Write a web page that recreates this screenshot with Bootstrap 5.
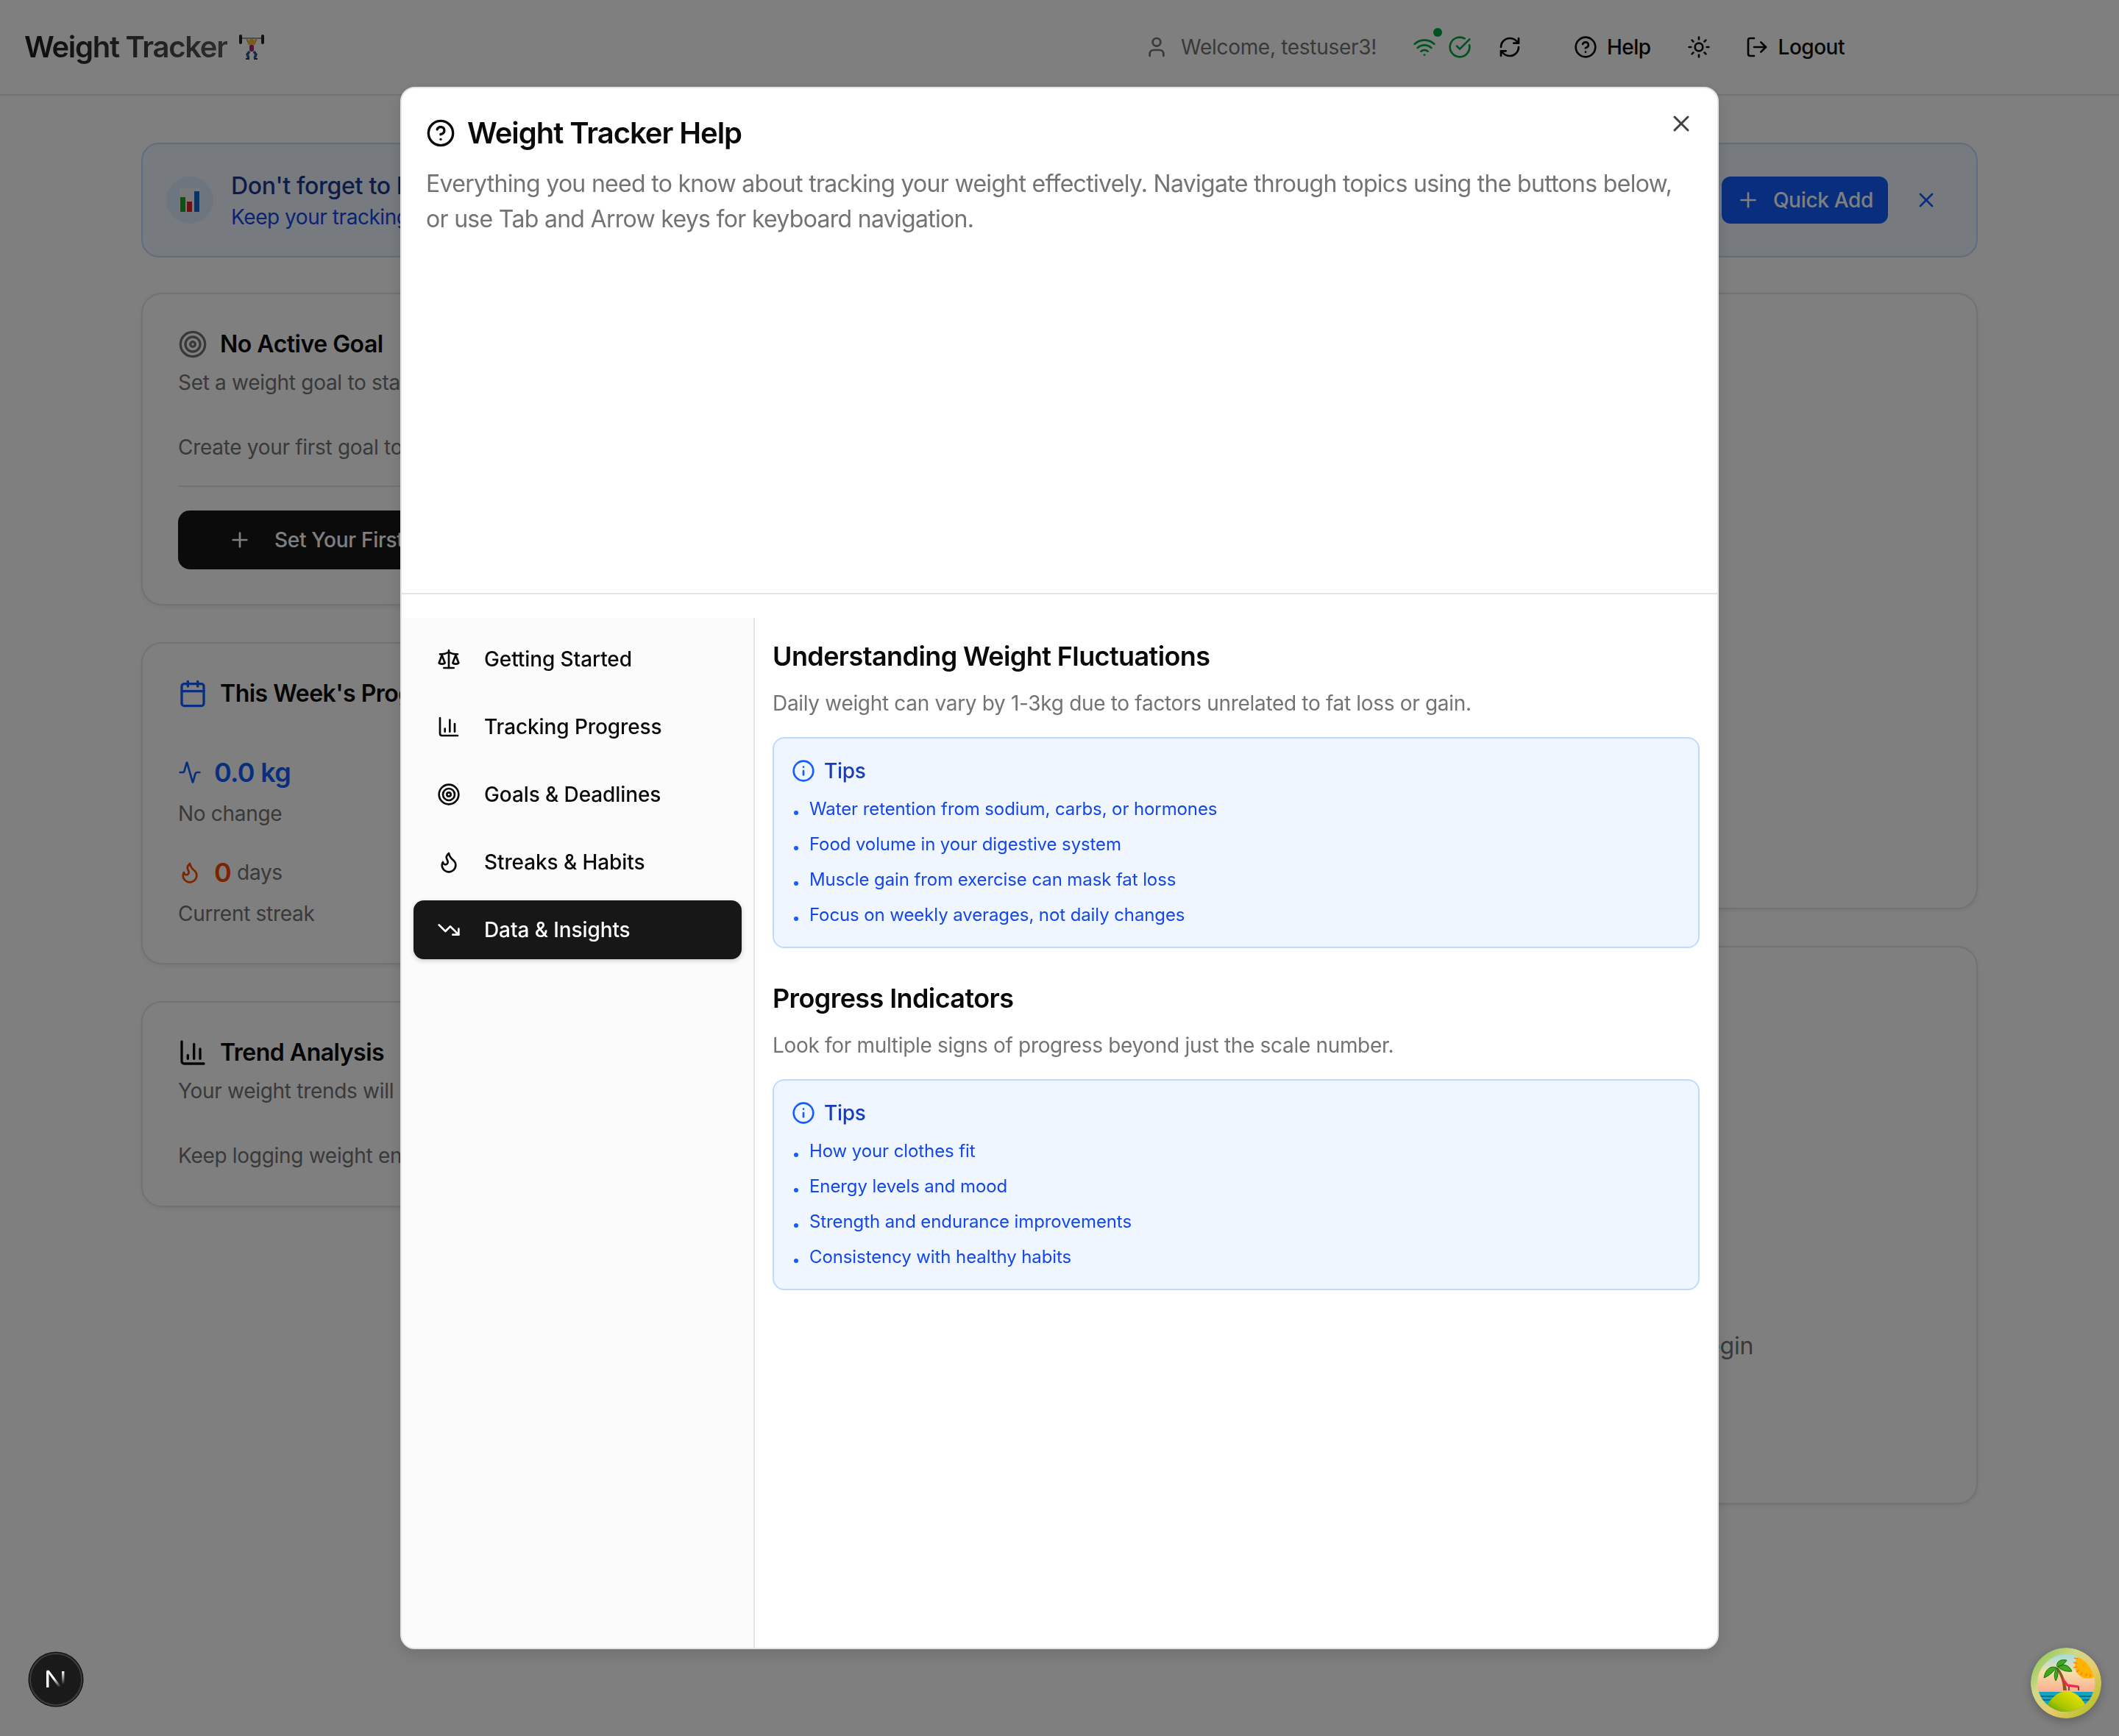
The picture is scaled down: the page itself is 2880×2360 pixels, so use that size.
<!DOCTYPE html>
<html lang="en">
<head>
  <meta charset="UTF-8" />
  <title>Weight Tracker</title>
  <meta name="viewport" content="width=device-width, initial-scale=1" />
  <link href="https://cdn.jsdelivr.net/npm/bootstrap@5.3.0/dist/css/bootstrap.min.css" rel="stylesheet" />
  <style>
    html, body { height: 2360px; overflow: hidden; }
    body { font-family: "Inter", "Liberation Sans", sans-serif; font-size: 28px; letter-spacing: -.3px; color: #0a0a0a; background: #fff; }
    svg.ico { fill: none; stroke: currentColor; stroke-width: 2; stroke-linecap: round; stroke-linejoin: round; flex: none; }
    .i32 { width: 32px; height: 32px; }
    .i36 { width: 36px; height: 36px; }
    .i40 { width: 40px; height: 40px; }
    .muted-txt { color: #737373; }

    /* top bar */
    .top-bar { height: 130px; border-bottom: 2px solid #e5e5e5; padding: 0 373px 0 33px; }
    .brand-txt { font-size: 40px; font-weight: 600; line-height: 56px; letter-spacing: -1.3px; margin-right: 16px; background: linear-gradient(90deg, #1a1a1a, #5a5a5a); -webkit-background-clip: text; background-clip: text; color: transparent; }
    .nav-user { gap: 17px; }
    .nav-wifi { position: relative; margin-left: 49px; }
    .nav-dot { position: absolute; top: -10px; left: 28px; width: 12px; height: 12px; border-radius: 50%; background: #00a63e; }
    .nav-green { color: #00a63e; }
    .nav-refresh { margin-left: 36px; }
    .nav-help { margin-left: 71px; gap: 13px; }
    .nav-sun { margin-left: 49px; }
    .nav-logout { margin-left: 47px; gap: 13px; }
    .nav-strong { font-weight: 500; letter-spacing: -.5px; }

    /* page behind the dialog */
    .page-main { padding: 64px 192px 0; }
    .reminder { height: 156px; border: 2px solid #bedbff; border-radius: 24px; background: #eff6ff; padding: 0 32px; margin-bottom: 48px; }
    .reminder-circle { width: 64px; height: 64px; border-radius: 50%; background: #dbeafe; }
    .reminder-title { font-size: 32px; font-weight: 500; line-height: 44px; color: #1c398e; letter-spacing: -.3px; }
    .reminder-sub { font-size: 28px; line-height: 36px; margin-top: 2px; letter-spacing: -.45px; color: #1447e6; }
    .quick-btn { height: 64px; width: 226px; margin-left: auto; border-radius: 12px; background: #155dfc; color: #fff; font-size: 28px; font-weight: 500; letter-spacing: -.3px; border: 0; gap: 18px; }
    .quick-x { color: #155dfc; margin-left: 12px; margin-right: 20px; }
    .dash-row { --bs-gutter-x: 48px; }
    .dash-card { --bs-card-border-color: #e5e5e5; --bs-card-border-width: 2px; --bs-card-border-radius: 28px; --bs-card-inner-border-radius: 26px; --bs-card-spacer-x: 48px; --bs-card-spacer-y: 48px; box-shadow: 0 2px 6px rgba(0,0,0,.08); }
    .card-stack { gap: 50px; }
    .title-row { height: 40px; gap: 17px; }
    .title-txt { font-size: 32px; font-weight: 600; line-height: 40px; letter-spacing: -.5px; }
    .line-40 { line-height: 40px; }
    .mt-12px { margin-top: 12px; }
    .mt-16px { margin-top: 16px; }
    .mt-40px { margin-top: 40px; }
    .mt-48px { margin-top: 48px; }
    .mt-67px { margin-top: 67px; }
    .pb-47px { padding-bottom: 47px; }
    .hr-line { height: 2px; background: #e5e5e5; margin-top: 32px; }
    .first-btn { height: 80px; margin-top: 32px; border-radius: 16px; background: #171717; color: #fff; font-size: 28px; font-weight: 500; letter-spacing: -.3px; border: 0; padding: 0 0 0 68px; gap: 31px; width: 100%; white-space: nowrap; justify-content: flex-start; }
    .stat-row { height: 40px; font-size: 36px; font-weight: 600; letter-spacing: -.7px; gap: 17px; }
    .stat-blue { color: #155dfc; }
    .stat-orange { color: #f54900; }
    .stat-unit { font-size: 28px; font-weight: 400; letter-spacing: -.3px; color: #737373; margin-left: -9px; }
    .log-card { height: 838px; }
    .entries-card { height: 759px; }
    .entries-body { padding: 0 303px 191px 0; font-size: 32px; color: #737373; line-height: 44px; }

    /* dialog */
    .help-scrim { position: fixed; inset: 0; background: rgba(0,0,0,.5); z-index: 10; }
    .help-dialog { width: 1792px; height: 2124px; background: #fff; border: 2px solid #e5e5e5; border-radius: 20px; box-shadow: 0 8px 24px rgba(0,0,0,.12); overflow: hidden; }
    .help-head { height: 686px; padding: 33px 33px 0; flex: none; position: relative; }
    .help-title { font-size: 40px; font-weight: 600; line-height: 56px; letter-spacing: -1.05px; gap: 16px; margin-bottom: 17px; }
    .help-desc { font-size: 32px; line-height: 48px; letter-spacing: -.7px; color: #737373; margin: 0; }
    .help-close { position: absolute; top: 30px; right: 31px; color: #404040; }
    .help-rule { height: 2px; background: #e5e5e5; flex: none; }
    .help-split { padding-top: 32px; min-height: 0; }
    .help-side { width: 480px; flex: none; background: #fbfbfb; border-right: 2px solid #e5e5e5; padding: 16px; gap: 12px; }
    .side-item { height: 80px; border-radius: 14px; padding-left: 32px; gap: 32px; font-size: 28px; font-weight: 500; letter-spacing: -.1px; color: #0a0a0a; }
    .side-on { background: #171717; color: #fff; box-shadow: 0 2px 6px rgba(0,0,0,.2); }
    .help-body { padding: 24px; }
    .sec-title { font-size: 36px; font-weight: 600; line-height: 56px; letter-spacing: -.6px; margin: 0 0 16px; }
    .sec-sub { font-size: 28px; line-height: 40px; letter-spacing: -.32px; color: #737373; margin: 0 0 26px; }
    .tip-box { background: #eff6ff; border: 2px solid #bedbff; border-radius: 16px; padding: 24px 24px 27px; margin-bottom: 40px; }
    .tip-head { font-size: 28px; font-weight: 500; line-height: 40px; color: #193cb8; gap: 12px; margin-bottom: 16px; }
    .tip-head svg { color: #155dfc; }
    .tip-list { list-style: none; margin: 0; padding: 0; gap: 16px; font-size: 24px; line-height: 32px; letter-spacing: -.1px; color: #1447e6; }
    .tip-list li { position: relative; padding-left: 24px; }
    .tip-list li::before { content: ""; position: absolute; left: 3px; top: 18px; width: 6px; height: 6px; border-radius: 50%; background: #155dfc; }

    /* corner widgets sit on top of the scrim */
    .dev-badge { position: fixed; left: 38px; top: 2245px; z-index: 20; width: 76px; height: 76px; }
    .island-badge { position: fixed; left: 2760px; top: 2240px; z-index: 20; width: 96px; height: 96px; border-radius: 50%; box-shadow: 0 4px 14px rgba(0,0,0,.25); }
  </style>
</head>
<body>
  <!-- lucide style icon set -->
  <svg width="0" height="0" class="position-absolute">
    <symbol id="i-help" viewBox="0 0 24 24"><circle cx="12" cy="12" r="10"/><path d="M9.09 9a3 3 0 0 1 5.83 1c0 2-3 3-3 3"/><path d="M12 17h.01"/></symbol>
    <symbol id="i-x" viewBox="0 0 24 24"><path d="M18 6 6 18"/><path d="m6 6 12 12"/></symbol>
    <symbol id="i-user" viewBox="0 0 24 24"><path d="M19 21v-2a4 4 0 0 0-4-4H9a4 4 0 0 0-4 4v2"/><circle cx="12" cy="7" r="4"/></symbol>
    <symbol id="i-wifi" viewBox="0 0 24 24"><path d="M12 20h.01"/><path d="M2 8.82a15 15 0 0 1 20 0"/><path d="M5 12.859a10 10 0 0 1 14 0"/><path d="M8.5 16.429a5 5 0 0 1 7 0"/></symbol>
    <symbol id="i-check" viewBox="0 0 24 24"><path d="M21.801 10A10 10 0 1 1 17 3.335"/><path d="m9 11 3 3L22 4"/></symbol>
    <symbol id="i-refresh" viewBox="0 0 24 24"><path d="M3 12a9 9 0 0 1 9-9 9.75 9.75 0 0 1 6.74 2.74L21 8"/><path d="M21 3v5h-5"/><path d="M21 12a9 9 0 0 1-9 9 9.75 9.75 0 0 1-6.74-2.74L3 16"/><path d="M8 16H3v5"/></symbol>
    <symbol id="i-sun" viewBox="0 0 24 24"><circle cx="12" cy="12" r="4"/><path d="M12 2v2"/><path d="M12 20v2"/><path d="m4.93 4.93 1.41 1.41"/><path d="m17.66 17.66 1.41 1.41"/><path d="M2 12h2"/><path d="M20 12h2"/><path d="m6.34 17.66-1.41 1.41"/><path d="m19.07 4.93-1.41 1.41"/></symbol>
    <symbol id="i-logout" viewBox="0 0 24 24"><path d="M9 21H5a2 2 0 0 1-2-2V5a2 2 0 0 1 2-2h4"/><path d="m16 17 5-5-5-5"/><path d="M21 12H9"/></symbol>
    <symbol id="i-scale" viewBox="0 0 24 24"><path d="m16 16 3-8 3 8c-.87.65-1.92 1-3 1s-2.13-.35-3-1Z"/><path d="m2 16 3-8 3 8c-.87.65-1.92 1-3 1s-2.13-.35-3-1Z"/><path d="M7 21h10"/><path d="M12 3v18"/><path d="M3 7h2c2 0 5-1 7-2 2 1 5 2 7 2h2"/></symbol>
    <symbol id="i-bars" viewBox="0 0 24 24"><path d="M3 3v16a2 2 0 0 0 2 2h16"/><path d="M18 17V9"/><path d="M13 17V5"/><path d="M8 17v-3"/></symbol>
    <symbol id="i-target" viewBox="0 0 24 24"><circle cx="12" cy="12" r="10"/><circle cx="12" cy="12" r="6"/><circle cx="12" cy="12" r="2"/></symbol>
    <symbol id="i-flame" viewBox="0 0 24 24"><path d="M8.5 14.5A2.5 2.5 0 0 0 11 12c0-1.38-.5-2-1-3-1.072-2.143-.224-4.054 2-6 .5 2.5 2 4.9 4 6.5 2 1.6 3 3.5 3 5.5a7 7 0 1 1-14 0c0-1.153.433-2.294 1-3a2.5 2.5 0 0 0 2.5 2.5z"/></symbol>
    <symbol id="i-down" viewBox="0 0 24 24"><path d="M16 17h6v-6"/><path d="m22 17-8.5-8.5-5 5L2 7"/></symbol>
    <symbol id="i-info" viewBox="0 0 24 24"><circle cx="12" cy="12" r="10"/><path d="M12 16v-4"/><path d="M12 8h.01"/></symbol>
    <symbol id="i-cal" viewBox="0 0 24 24"><path d="M8 2v4"/><path d="M16 2v4"/><rect x="3" y="4" width="18" height="18" rx="2"/><path d="M3 10h18"/></symbol>
    <symbol id="i-pulse" viewBox="0 0 24 24"><path d="M22 12h-2.48a2 2 0 0 0-1.93 1.46l-2.35 8.36a.25.25 0 0 1-.48 0L9.24 2.18a.25.25 0 0 0-.48 0l-2.35 8.36A2 2 0 0 1 4.49 12H2"/></symbol>
    <symbol id="i-plus" viewBox="0 0 24 24"><path d="M5 12h14"/><path d="M12 5v14"/></symbol>
  </svg>

  <header class="top-bar d-flex align-items-center">
    <span class="brand-txt">Weight Tracker</span>
    <!-- person lifting weights emoji -->
    <svg width="34" height="34" viewBox="0 0 34 34" class="me-auto">
      <rect x="0" y="0" width="4" height="13" rx="2" fill="#222"/>
      <rect x="30" y="0" width="4" height="13" rx="2" fill="#222"/>
      <path d="M4 5h26" stroke="#777" stroke-width="1.5"/>
      <path d="M10 5l4 9M24 5l-4 9" stroke="#e8b23a" stroke-width="2.5"/>
      <circle cx="17" cy="10" r="4" fill="#f0b93a"/>
      <rect x="14" y="14" width="6" height="9" rx="2" fill="#a8267e"/>
      <path d="M14 23l-3 4 2 5M20 23l3 4-2 5" fill="none" stroke="#2c5a8c" stroke-width="3.5"/>
      <path d="M9 33h5M20 33h5" stroke="#333" stroke-width="2"/>
    </svg>
    <div class="nav-user d-flex align-items-center muted-txt">
      <svg class="ico i32"><use href="#i-user"/></svg>
      <span>Welcome, testuser3!</span>
    </div>
    <div class="nav-wifi nav-green d-flex align-items-center gap-3">
      <svg class="ico i32"><use href="#i-wifi"/></svg>
      <span class="nav-dot"></span>
      <svg class="ico i32"><use href="#i-check"/></svg>
    </div>
    <svg class="ico i32 nav-refresh"><use href="#i-refresh"/></svg>
    <div class="nav-help nav-strong d-flex align-items-center">
      <svg class="ico i32"><use href="#i-help"/></svg><span>Help</span>
    </div>
    <svg class="ico i32 nav-sun"><use href="#i-sun"/></svg>
    <div class="nav-logout nav-strong d-flex align-items-center">
      <svg class="ico i32"><use href="#i-logout"/></svg><span>Logout</span>
    </div>
  </header>

  <main class="page-main">
    <section class="reminder d-flex align-items-center gap-4">
      <div class="reminder-circle d-flex align-items-center justify-content-center">
        <!-- bar chart emoji -->
        <svg width="28" height="32" viewBox="0 0 28 32">
          <rect width="28" height="32" fill="#f2f2f2"/>
          <rect x="1" y="12" width="7" height="20" fill="#1fa51f"/>
          <rect x="10" y="18" width="7" height="14" fill="#d8232a"/>
          <rect x="20" y="4" width="7" height="28" fill="#1766c8"/>
        </svg>
      </div>
      <div>
        <div class="reminder-title">Don't forget to log your weight!</div>
        <div class="reminder-sub">Keep your tracking streak going today</div>
      </div>
      <button class="quick-btn d-flex align-items-center justify-content-center">
        <svg class="ico i32"><use href="#i-plus"/></svg>Quick Add
      </button>
      <svg class="ico i32 quick-x"><use href="#i-x"/></svg>
    </section>

    <div class="row dash-row">
      <div class="col-4 d-flex flex-column card-stack">
        <div class="card dash-card">
          <div class="card-body pb-47px">
            <div class="title-row d-flex align-items-center">
              <svg class="ico i40 muted-txt"><use href="#i-target"/></svg>
              <span class="title-txt">No Active Goal</span>
            </div>
            <div class="muted-txt line-40 mt-12px">Set a weight goal to start tracking progress</div>
            <div class="muted-txt line-40 mt-48px">Create your first goal to stay motivated</div>
            <div class="hr-line"></div>
            <button class="first-btn d-flex align-items-center">
              <svg class="ico i32"><use href="#i-plus"/></svg>Set Your First Goal
            </button>
          </div>
        </div>
        <div class="card dash-card">
          <div class="card-body pb-47px">
            <div class="title-row d-flex align-items-center">
              <svg class="ico i40 stat-blue"><use href="#i-cal"/></svg>
              <span class="title-txt">This Week's Progress</span>
            </div>
            <div class="stat-row stat-blue d-flex align-items-center mt-67px">
              <svg class="ico i32"><use href="#i-pulse"/></svg><span>0.0 kg</span>
            </div>
            <div class="muted-txt line-40 mt-16px">No change</div>
            <div class="stat-row stat-orange d-flex align-items-center mt-40px">
              <svg class="ico i32"><use href="#i-flame"/></svg><span>0</span><span class="stat-unit">days</span>
            </div>
            <div class="muted-txt line-40 mt-16px">Current streak</div>
          </div>
        </div>
        <div class="card dash-card">
          <div class="card-body">
            <div class="title-row d-flex align-items-center">
              <svg class="ico i40"><use href="#i-bars"/></svg>
              <span class="title-txt">Trend Analysis</span>
            </div>
            <div class="muted-txt line-40 mt-12px">Your weight trends will appear here</div>
            <div class="muted-txt line-40 mt-48px">Keep logging weight entries</div>
          </div>
        </div>
      </div>
      <div class="col-8 d-flex flex-column card-stack">
        <div class="card dash-card log-card"></div>
        <div class="card dash-card entries-card">
          <div class="entries-body d-flex align-items-end justify-content-end h-100">Log your first weight entry to begin</div>
        </div>
      </div>
    </div>
  </main>

  <div class="help-scrim d-flex align-items-center justify-content-center">
    <div class="help-dialog d-flex flex-column">
      <div class="help-head">
        <div class="help-title d-flex align-items-center">
          <svg class="ico i40"><use href="#i-help"/></svg>
          <span>Weight Tracker Help</span>
        </div>
        <p class="help-desc">Everything you need to know about tracking your weight effectively. Navigate through topics using the buttons below, or use Tab and Arrow keys for keyboard navigation.</p>
        <svg class="ico i36 help-close"><use href="#i-x"/></svg>
      </div>
      <div class="help-rule"></div>
      <div class="help-split d-flex flex-grow-1">
        <nav class="help-side d-flex flex-column">
          <div class="side-item d-flex align-items-center"><svg class="ico i32"><use href="#i-scale"/></svg>Getting Started</div>
          <div class="side-item d-flex align-items-center"><svg class="ico i32"><use href="#i-bars"/></svg>Tracking Progress</div>
          <div class="side-item d-flex align-items-center"><svg class="ico i32"><use href="#i-target"/></svg>Goals &amp; Deadlines</div>
          <div class="side-item d-flex align-items-center"><svg class="ico i32"><use href="#i-flame"/></svg>Streaks &amp; Habits</div>
          <div class="side-item side-on d-flex align-items-center"><svg class="ico i32"><use href="#i-down"/></svg>Data &amp; Insights</div>
        </nav>
        <div class="help-body flex-grow-1">
          <h3 class="sec-title">Understanding Weight Fluctuations</h3>
          <p class="sec-sub">Daily weight can vary by 1-3kg due to factors unrelated to fat loss or gain.</p>
          <div class="tip-box">
            <div class="tip-head d-flex align-items-center"><svg class="ico i32"><use href="#i-info"/></svg>Tips</div>
            <ul class="tip-list d-flex flex-column">
              <li>Water retention from sodium, carbs, or hormones</li>
              <li>Food volume in your digestive system</li>
              <li>Muscle gain from exercise can mask fat loss</li>
              <li>Focus on weekly averages, not daily changes</li>
            </ul>
          </div>
          <h3 class="sec-title">Progress Indicators</h3>
          <p class="sec-sub">Look for multiple signs of progress beyond just the scale number.</p>
          <div class="tip-box">
            <div class="tip-head d-flex align-items-center"><svg class="ico i32"><use href="#i-info"/></svg>Tips</div>
            <ul class="tip-list d-flex flex-column">
              <li>How your clothes fit</li>
              <li>Energy levels and mood</li>
              <li>Strength and endurance improvements</li>
              <li>Consistency with healthy habits</li>
            </ul>
          </div>
        </div>
      </div>
    </div>
  </div>

  <!-- dev tools badge -->
  <svg class="dev-badge" viewBox="0 0 76 76">
    <defs>
      <linearGradient id="n-fade" x1="0" y1="0" x2="0.6" y2="1"><stop offset="0.5" stop-color="#fff"/><stop offset="1" stop-color="#fff" stop-opacity="0"/></linearGradient>
      <linearGradient id="n-fade2" x1="0" y1="0" x2="0" y2="1"><stop offset="0" stop-color="#fff"/><stop offset="1" stop-color="#fff" stop-opacity="0"/></linearGradient>
    </defs>
    <circle cx="38" cy="38" r="37.5" fill="#111"/>
    <circle cx="38" cy="38" r="35" fill="#1a1a1a" stroke="#3d3d3d" stroke-width="2"/>
    <rect x="25" y="27" width="3.4" height="22" fill="#fff"/>
    <path d="M26 27h3.6l19 26-3 2z" fill="url(#n-fade)" transform="translate(-.5 0) scale(.98 .95)"/>
    <rect x="46" y="27" width="3.4" height="18" fill="url(#n-fade2)"/>
  </svg>

  <!-- island avatar -->
  <svg class="island-badge" viewBox="0 0 96 96">
    <defs>
      <linearGradient id="ring" x1="0" y1="0" x2="1" y2="1"><stop offset="0" stop-color="#7fc24a"/><stop offset=".35" stop-color="#cfd98a"/><stop offset=".6" stop-color="#e9c96a"/><stop offset="1" stop-color="#9fbf10"/></linearGradient>
      <linearGradient id="sky" x1="0" y1="0" x2="0" y2="1"><stop offset="0" stop-color="#85dcf5"/><stop offset=".35" stop-color="#f5dfa8"/><stop offset=".7" stop-color="#ff9f8a"/></linearGradient>
      <linearGradient id="hill" x1="1" y1="0" x2="0" y2="1"><stop offset="0" stop-color="#ffee00"/><stop offset=".6" stop-color="#a8c400"/><stop offset="1" stop-color="#2f8a00"/></linearGradient>
      <clipPath id="disc"><circle cx="48" cy="48" r="39"/></clipPath>
    </defs>
    <circle cx="48" cy="48" r="48" fill="url(#ring)"/>
    <g clip-path="url(#disc)">
      <rect width="96" height="96" fill="url(#sky)"/>
      <circle cx="78" cy="24" r="18" fill="#ffb300"/>
      <path d="M59 14l5 1M58 20l5 1M58 27l5-1M62 33l4-3M68 37l2-4M75 39l1-4M81 40v-4" stroke="#f77f1e" stroke-width="1.6"/>
      <rect x="8" y="60" width="80" height="30" fill="#12a5c0"/>
      <path d="M8 66h80M8 71h80" stroke="#0b6f8c" stroke-width="2"/>
      <path d="M44 58c0-12-4-22-10-30l3-1c7 8 10 18 12 31z" fill="#8a5a1c"/>
      <path d="M35 27c-8-3-15 2-17 14 5-2 11-6 17-14zM36 26c-2-7 5-11 13-9-3 5-7 8-13 9zM37 26c7-5 15-3 19 6-7 1-14-1-19-6zM36 27c-4 5-5 12-2 18 3-5 4-11 2-18z" fill="#3fa81c" stroke="#1c6b10" stroke-width="1"/>
      <path d="M44 44l6 7 15 2 0 5M52 51v7" stroke="#222" stroke-width="1.4" fill="none"/>
      <path d="M43 42l7 9 15 2" stroke="#f5234e" stroke-width="3" fill="none"/>
      <path d="M20 84c6-16 18-25 29-25s22 9 28 25v10H20z" fill="url(#hill)"/>
    </g>
  </svg>
</body>
</html>
